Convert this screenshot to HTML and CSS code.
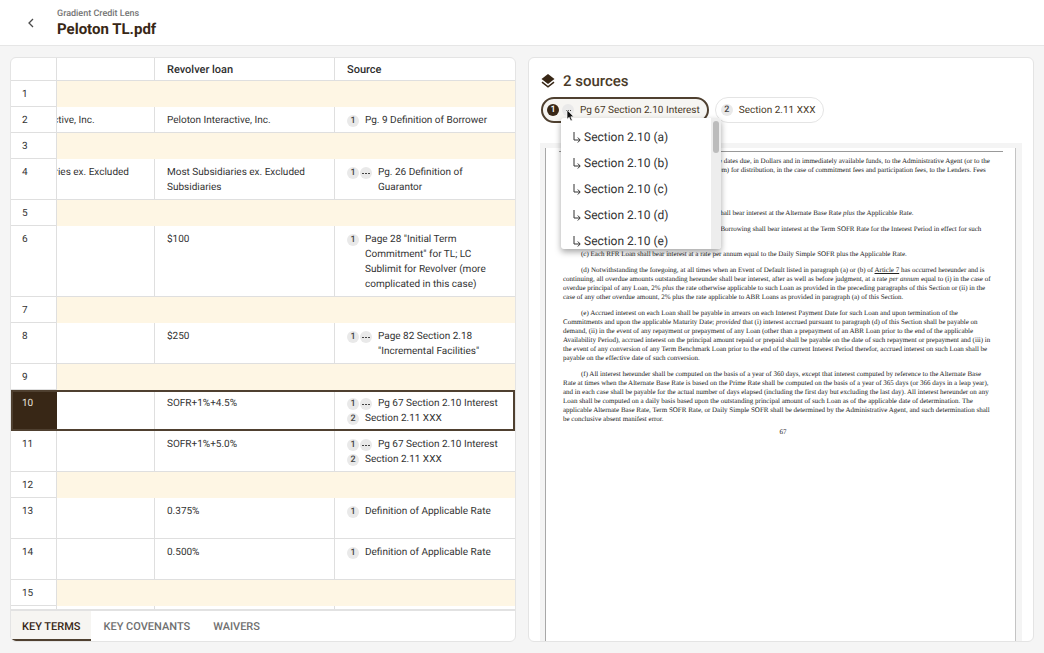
FILE: index.html
```html
<!DOCTYPE html>
<html lang="en">
<head>
<meta charset="utf-8">
<title>Peloton TL.pdf</title>
<link rel="stylesheet" href="styles.css">
</head>
<body>
<div class="app">
  <header class="topbar">
    <button class="back" aria-label="Back"><svg width="8" height="10" viewBox="0 0 8 10"><path d="M6 1 2 5l4 4" fill="none" stroke="#4a4a4a" stroke-width="1.3"/></svg></button>
    <div>
      <div class="product">Gradient Credit Lens</div>
      <h1 class="title">Peloton TL.pdf</h1>
    </div>
  </header>
  <main class="panels">
    <section class="panel">
      <div class="table-area">
        <table class="terms">
          <colgroup><col class="c-num"><col class="c-term"><col class="c-revolver"><col class="c-source"></colgroup>
          <thead><tr><th></th><th></th><th>Revolver loan</th><th>Source</th></tr></thead>
          <tbody>
            <tr class="band"><td>1</td><td colspan="3"></td></tr>
            <tr><td>2</td><td><div class="scrolled">Peloton Interactive, Inc.</div></td><td>Peloton Interactive, Inc.</td><td><div class="src"><span class="badge">1</span><span class="src-text">Pg. 9 Definition of Borrower</span></div></td></tr>
            <tr class="band"><td>3</td><td colspan="3"></td></tr>
            <tr><td>4</td><td><div class="scrolled">Most Subsidiaries ex. Excluded Subsidiaries</div></td><td>Most Subsidiaries ex. Excluded Subsidiaries</td><td><div class="src"><span class="badge">1</span><button class="badge more" aria-label="More sections"><i></i><i></i><i></i></button><span class="src-text">Pg. 26 Definition of Guarantor</span></div></td></tr>
            <tr class="band"><td>5</td><td colspan="3"></td></tr>
            <tr><td>6</td><td></td><td>$100</td><td><div class="src"><span class="badge">1</span><span class="src-text">Page 28 "Initial Term Commitment" for TL; LC Sublimit for Revolver (more complicated in this case)</span></div></td></tr>
            <tr class="band"><td>7</td><td colspan="3"></td></tr>
            <tr><td>8</td><td></td><td>$250</td><td><div class="src"><span class="badge">1</span><button class="badge more" aria-label="More sections"><i></i><i></i><i></i></button><span class="src-text">Page 82 Section 2.18 "Incremental Facilities"</span></div></td></tr>
            <tr class="band"><td>9</td><td colspan="3"></td></tr>
            <tr class="selected"><td>10</td><td></td><td>SOFR+1%+4.5%</td><td><div class="src"><span class="badge">1</span><button class="badge more" aria-label="More sections"><i></i><i></i><i></i></button><span class="src-text">Pg 67 Section 2.10 Interest</span></div><div class="src"><span class="badge">2</span><span class="src-text">Section 2.11 XXX</span></div></td></tr>
            <tr><td>11</td><td></td><td>SOFR+1%+5.0%</td><td><div class="src"><span class="badge">1</span><button class="badge more" aria-label="More sections"><i></i><i></i><i></i></button><span class="src-text">Pg 67 Section 2.10 Interest</span></div><div class="src"><span class="badge">2</span><span class="src-text">Section 2.11 XXX</span></div></td></tr>
            <tr class="band"><td>12</td><td colspan="3"></td></tr>
            <tr class="tall"><td>13</td><td></td><td>0.375%</td><td><div class="src"><span class="badge">1</span><span class="src-text">Definition of Applicable Rate</span></div></td></tr>
            <tr class="tall"><td>14</td><td></td><td>0.500%</td><td><div class="src"><span class="badge">1</span><span class="src-text">Definition of Applicable Rate</span></div></td></tr>
            <tr class="band"><td>15</td><td colspan="3"></td></tr>
            <tr><td></td><td></td><td></td><td></td></tr>
          </tbody>
        </table>
      </div>
      <nav class="tabs">
        <button class="tab active">KEY TERMS</button>
        <button class="tab">KEY COVENANTS</button>
        <button class="tab">WAIVERS</button>
      </nav>
    </section>
    <section class="panel viewer">
      <h2 class="sources-title"><svg width="14" height="14" viewBox="0 0 14 14"><path d="M7 0 .5 5 7 10l6.500-5z" fill="#382716"/><path d="M1 8.200 7 12.900l6-4.700" fill="none" stroke="#382716" stroke-width="1.500"/></svg>2 sources</h2>
      <div class="chips">
        <div class="chip-wrap">
          <button class="chip current"><span class="badge solid">1</span><span class="badge more"><i></i><i></i><i></i></span><span class="chip-text">Pg 67 Section 2.10 Interest</span></button>
          <div class="menu">
            <ul class="menu-list">
              <li><button class="menu-item"><svg width="8" height="11" viewBox="0 0 8 11"><path d="M1 0v8h6M4.800 5.500 7.200 8 4.800 10.500" fill="none" stroke="#333" stroke-width="1"/></svg>Section 2.10 (a)</button></li>
              <li><button class="menu-item"><svg width="8" height="11" viewBox="0 0 8 11"><path d="M1 0v8h6M4.800 5.500 7.200 8 4.800 10.500" fill="none" stroke="#333" stroke-width="1"/></svg>Section 2.10 (b)</button></li>
              <li><button class="menu-item"><svg width="8" height="11" viewBox="0 0 8 11"><path d="M1 0v8h6M4.800 5.500 7.200 8 4.800 10.500" fill="none" stroke="#333" stroke-width="1"/></svg>Section 2.10 (c)</button></li>
              <li><button class="menu-item"><svg width="8" height="11" viewBox="0 0 8 11"><path d="M1 0v8h6M4.800 5.500 7.200 8 4.800 10.500" fill="none" stroke="#333" stroke-width="1"/></svg>Section 2.10 (d)</button></li>
              <li><button class="menu-item"><svg width="8" height="11" viewBox="0 0 8 11"><path d="M1 0v8h6M4.800 5.500 7.200 8 4.800 10.500" fill="none" stroke="#333" stroke-width="1"/></svg>Section 2.10 (e)</button></li>
            </ul>
            <div class="menu-scroll"><div class="menu-thumb"></div></div>
          </div>
          <svg class="pointer" width="9" height="13" viewBox="0 0 9 13"><path d="M1 .7v9.600l2.200-2 1.500 3.700 1.600-.7-1.500-3.500h3z" fill="#111" stroke="#fff" stroke-width=".7"/></svg>
        </div>
        <button class="chip"><span class="badge">2</span><span class="chip-text">Section 2.11 XXX</span></button>
      </div>
      <div class="document">
        <article class="page">
          <p class="first">(d) All fees payable hereunder shall be paid on the dates due, in Dollars and in immediately available funds, to the Administrative Agent (or to the<br>relevant Issuing Banks, in the case of fees payable to them) for distribution, in the case of commitment fees and participation fees, to the Lenders. Fees</p>
          <p>(a) The Loans comprising each ABR Borrowing shall bear interest at the Alternate Base Rate <em>plus</em> the Applicable Rate.</p>
          <p>(b) The Loans comprising each Term Benchmark Borrowing shall bear interest at the Term SOFR Rate for the Interest Period in effect for such<br>Borrowing <em>plus</em> the Applicable Rate.</p>
          <p>(c) Each RFR Loan shall bear interest at a rate per annum equal to the Daily Simple SOFR plus the Applicable Rate.</p>
          <p>(d) Notwithstanding the foregoing, at all times when an Event of Default listed in paragraph (a) or (b) of <u>Article 7</u> has occurred hereunder and is<br>continuing, all overdue amounts outstanding hereunder shall bear interest, after as well as before judgment, at a rate <em>per annum</em> equal to (i) in the case of<br>overdue principal of any Loan, 2% <em>plus</em> the rate otherwise applicable to such Loan as provided in the preceding paragraphs of this Section or (ii) in the<br>case of any other overdue amount, 2% plus the rate applicable to ABR Loans as provided in paragraph (a) of this Section.</p>
          <p>(e) Accrued interest on each Loan shall be payable in arrears on each Interest Payment Date for such Loan and upon termination of the<br>Commitments and upon the applicable Maturity Date; <em>provided</em> that (i) interest accrued pursuant to paragraph (d) of this Section shall be payable on<br>demand, (ii) in the event of any repayment or prepayment of any Loan (other than a prepayment of an ABR Loan prior to the end of the applicable<br>Availability Period), accrued interest on the principal amount repaid or prepaid shall be payable on the date of such repayment or prepayment and (iii) in<br>the event of any conversion of any Term Benchmark Loan prior to the end of the current Interest Period therefor, accrued interest on such Loan shall be<br>payable on the effective date of such conversion.</p>
          <p>(f) All interest hereunder shall be computed on the basis of a year of 360 days, except that interest computed by reference to the Alternate Base<br>Rate at times when the Alternate Base Rate is based on the Prime Rate shall be computed on the basis of a year of 365 days (or 366 days in a leap year),<br>and in each case shall be payable for the actual number of days elapsed (including the first day but excluding the last day). All interest hereunder on any<br>Loan shall be computed on a daily basis based upon the outstanding principal amount of such Loan as of the applicable date of determination. The<br>applicable Alternate Base Rate, Term SOFR Rate, or Daily Simple SOFR shall be determined by the Administrative Agent, and such determination shall<br>be conclusive absent manifest error.</p>
          <footer class="folio">67</footer>
        </article>
      </div>
    </section>
  </main>
</div>
</body>
</html>
```
FILE: styles.css
```css
* { box-sizing: border-box; }
body { margin: 0; background: #f5f5f5; color: #333; font: 10px/15px Roboto, "Liberation Sans", sans-serif; text-rendering: geometricPrecision; }
button { font: inherit; color: inherit; border: 0; background: none; padding: 0; text-rendering: inherit; }
.app { height: 100vh; display: flex; flex-direction: column; }
.topbar { height: 46px; flex: none; display: flex; align-items: center; background: #fff; border-bottom: 1px solid #e6e6e6; }
.back { width: 57px; height: 24px; display: flex; align-items: center; justify-content: center; padding-left: 4px; }
.product { padding-top: 1px; font-size: 9px; line-height: 12px; font-weight: 500; color: #757575; }
.title { margin: 0; font-size: 15px; line-height: 19px; font-weight: 700; color: #382716; }
.panels { flex: 1; min-height: 0; display: grid; grid-template-columns: 1fr 1fr; gap: 12px; padding: 11px 10px; }
.panel { min-width: 0; min-height: 0; display: flex; flex-direction: column; background: #fff; border: 1px solid #e4e4e4; border-radius: 6px; overflow: hidden; }

.table-area { flex: 1; min-height: 0; overflow: hidden; }
.terms { width: 100%; table-layout: fixed; border-collapse: separate; border-spacing: 0; }
.c-num { width: 46px; }
.c-term { width: 98px; }
th { height: 23px; padding: 0 12px; text-align: left; font-size: 11px; font-weight: 500; color: #2e2e2e; }
th, td { border-right: 1px solid #dfdfdf; border-bottom: 1px solid #dfdfdf; }
th:last-child, td:last-child { border-right: 0; }
td { height: 26px; padding: 6px 12px 4px; vertical-align: top; overflow: hidden; }
td:last-child { padding-right: 0; }
td:first-child { padding-left: 11px; }
.band td:last-child { background: #fef6e4; border-bottom: 0; }
.tall td { height: 41px; }
.scrolled { width: 156px; margin-left: -78px; }
.selected { outline: 2px solid #4f4030; outline-offset: -2px; }
.selected td:first-child { background: #382716; color: #e8e3dc; border-color: #382716; }
.src { display: flex; gap: 1px; padding-right: 10px; }
.src-text { flex: 1; min-width: 0; padding-left: 5px; }
.badge { flex: none; width: 12px; height: 12px; margin-top: 2px; border-radius: 50%; background: #e9e9e9; font-size: 9px; line-height: 12px; font-weight: 500; text-align: center; color: #444; }
.more { display: flex; align-items: center; justify-content: center; gap: 1px; }
.more i { width: 1px; height: 1px; background: #444; }
.table-area .more i { width: 2px; }

.tabs { flex: none; display: flex; height: 32px; border-top: 2px solid #e2e2e2; }
.tab { padding: 2px 11px 0 12px; font-size: 11px; font-weight: 500; color: #707070; border-bottom: 2px solid transparent; }
.tab.active { padding: 2px 11px 0; background: #f6f5f2; color: #382716; border-color: #4f4030; }

.viewer { padding: 13px 11px 0; }
.sources-title { display: flex; align-items: center; gap: 8px; margin: 0; padding-left: 1px; font-size: 15px; line-height: 20px; font-weight: 500; color: #4a3a28; }
.chips { display: flex; gap: 6px; margin-top: 6px; padding-left: 1px; }
.chip-wrap { position: relative; z-index: 1; }
.chip { height: 26px; display: flex; align-items: center; gap: 3px; padding: 0 8px 0 5px; border: 1px solid #e4e4e4; border-radius: 13px; background: #fff; color: #4a3a28; white-space: nowrap; }
.chip .badge { margin-top: 0; }
.chip-text { padding-left: 3px; }
.chip.current { border: 2px solid #4f4030; background: #f6f5f2; padding: 0 7px 0 4px; }
.chip .badge.solid { background: #382716; color: #fff; }
.menu { position: absolute; left: 20px; top: 21px; width: 160px; height: 131px; display: flex; overflow: hidden; background: #fff; border-radius: 3px; box-shadow: 0 3px 6px rgba(0, 0, 0, .35); }
.menu-list { flex: 1; margin: 0; padding: 6px 0 0; list-style: none; }
.menu-item { display: flex; align-items: center; gap: 3px; height: 26px; padding-left: 12px; font-size: 12px; color: #333; white-space: nowrap; }
.menu-scroll { width: 10px; padding: 3px 2px; background: #ededed; }
.menu-thumb { height: 32px; border-radius: 3px; background: #bcbcbc; }
.pointer { position: absolute; left: 25px; top: 12px; }

.document { flex: 1; min-height: 0; display: flex; margin-top: 20px; padding: 5px 6px 0 5px; background: #f4f4f4; overflow: hidden; }
.page { flex: 1; min-width: 0; padding: 0 12px 0 17px; background: #fff; border-left: 1px solid #a8a8a8; border-right: 1px solid #c4c4c4; color: #222; font: 7px/9px "Liberation Serif", "Times New Roman", serif; white-space: nowrap; }
.page p { margin: 0 0 7px; text-indent: 18px; }
.page::before { content: ""; display: block; height: 3px; margin: 0 0 5px -4px; border-bottom: 1px solid #999; }
.page p.first { margin-bottom: 34px; }
.page p:last-of-type { margin-bottom: 4px; }
.folio { text-align: center; }
```
